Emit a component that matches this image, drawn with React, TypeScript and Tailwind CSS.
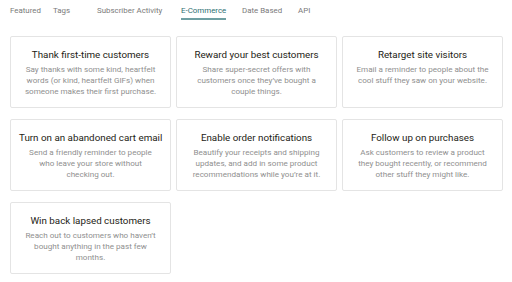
import React from 'react';

const tabs = [
  { label: 'Featured', cls: 'w-[43px]' },
  { label: 'Tags', cls: 'w-[44px]' },
  { label: 'Subscriber Activity', cls: 'w-[84px]' },
  { label: 'E-Commerce', cls: 'w-[61px]', active: true },
  { label: 'Date Based', cls: 'w-[56px]' },
  { label: 'API', cls: 'w-[30px]' },
];

const cards = [
  {
    title: 'Thank first-time customers',
    body: 'Say thanks with some kind, heartfelt words (or kind, heartfelt GIFs) when someone makes their first purchase.',
  },
  {
    title: 'Reward your best customers',
    body: 'Share super-secret offers with customers once they’ve bought a couple things.',
  },
  {
    title: 'Retarget site visitors',
    body: 'Email a reminder to people about the cool stuff they saw on your website.',
  },
  {
    title: 'Turn on an abandoned cart email',
    body: 'Send a friendly reminder to people who leave your store without checking out.',
  },
  {
    title: 'Enable order notifications',
    body: 'Beautify your receipts and shipping updates, and add in some product recommendations while you’re at it.',
  },
  {
    title: 'Follow up on purchases',
    body: 'Ask customers to review a product they bought recently, or recommend other stuff they might like.',
  },
  {
    title: 'Win back lapsed customers',
    body: 'Reach out to customers who haven’t bought anything in the past few months.',
  },
];

export default function App() {
  return (
    <div className="w-[512px] h-[282px] bg-white font-['Roboto',sans-serif] overflow-hidden">
      {/* Tabs */}
      <div className="flex h-[20px] items-start pt-[5px] pl-[10px]">
        {tabs.map((t) => (
          <div key={t.label} className={`${t.cls} shrink-0 flex items-start`}>
            <div
              className={`flex flex-col text-[7.9px] leading-[11px] ${
                t.active ? 'text-[#2c6e72]' : 'text-[#7a7a7a]'
              }`}
            >
              <span>{t.label}</span>
              {t.active && <div className="mt-[2px] h-[2px] bg-[#6f9fa2]" />}
            </div>
          </div>
        ))}
      </div>

      {/* Cards */}
      <div className="grid grid-cols-3 gap-x-[5px] gap-y-[11px] pl-[10px] pr-[9px] pt-[16px]">
        {cards.map((c) => (
          <div
            key={c.title}
            className="h-[72px] border border-[#e4e4e4] rounded-[2px] px-[8px] pt-[11px] text-center"
          >
            <div className="text-[9.8px] leading-[13px] text-[#241c15] whitespace-nowrap">{c.title}</div>
            <div className="mt-[3px] px-[4px] text-[8.1px] leading-[11px] text-[#8f8f8f]">{c.body}</div>
          </div>
        ))}
      </div>
    </div>
  );
}
